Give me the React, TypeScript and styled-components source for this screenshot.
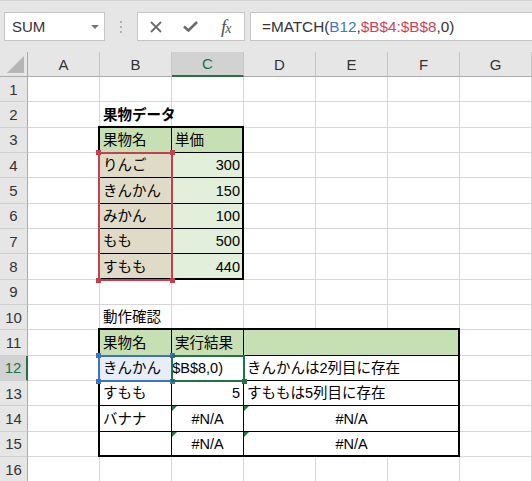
import React from "react";
import styled, { createGlobalStyle, css } from "styled-components";

type Align = "left" | "right" | "center";

interface CellDef {
  r: number;
  c: number;
  span?: number;
  text?: string;
  bg?: string;
  align?: Align;
  bold?: boolean;
  err?: boolean;
  edit?: boolean;
}

const GRID = "#d6d6d6";
const EXCEL_GREEN = "#217346";
const HEAD_GREEN = "#c6e0b4";
const TAN = "#dfdbc6";
const MINT = "#e2efda";
const PALE_BLUE = "#e7eef9";

const COLS = ["A", "B", "C", "D", "E", "F", "G"];
const ROWS = Array.from({ length: 16 }, (_, i) => i + 1);

const tables = [
  { r1: 3, r2: 8, c1: 2, c2: 3 },
  { r1: 11, r2: 15, c1: 2, c2: 6 },
];

const fruits = [
  ["りんご", "300"],
  ["きんかん", "150"],
  ["みかん", "100"],
  ["もも", "500"],
  ["すもも", "440"],
];

const defs: CellDef[] = [
  { r: 2, c: 2, text: "果物データ", bold: true },
  { r: 3, c: 2, text: "果物名", bg: HEAD_GREEN },
  { r: 3, c: 3, text: "単価", bg: HEAD_GREEN },
  ...fruits.flatMap(([name, price], i): CellDef[] => [
    { r: 4 + i, c: 2, text: name, bg: TAN },
    { r: 4 + i, c: 3, text: price, bg: MINT, align: "right" },
  ]),
  { r: 10, c: 2, text: "動作確認" },
  { r: 11, c: 2, text: "果物名", bg: HEAD_GREEN },
  { r: 11, c: 3, text: "実行結果", bg: HEAD_GREEN },
  { r: 11, c: 4, span: 3, bg: HEAD_GREEN },
  { r: 12, c: 2, text: "きんかん", bg: PALE_BLUE },
  // cell is being edited: only the tail of the formula is scrolled into view
  { r: 12, c: 3, text: "$B$8,0)", edit: true },
  { r: 12, c: 4, span: 3, text: "きんかんは2列目に存在" },
  { r: 13, c: 2, text: "すもも" },
  { r: 13, c: 3, text: "5", align: "right" },
  { r: 13, c: 4, span: 3, text: "すももは5列目に存在" },
  { r: 14, c: 2, text: "バナナ" },
  { r: 14, c: 3, text: "#N/A", align: "center", err: true },
  { r: 14, c: 4, span: 3, text: "#N/A", align: "center", err: true },
  { r: 15, c: 3, text: "#N/A", align: "center", err: true },
  { r: 15, c: 4, span: 3, text: "#N/A", align: "center", err: true },
];

const GlobalStyle = createGlobalStyle`
  html, body {
    margin: 0;
    padding: 0;
  }
  body {
    background: #e6e6e6;
    font-family: "Liberation Sans", "Noto Sans CJK JP", sans-serif;
    color: #000;
    overflow: hidden;
  }
`;

const Window = styled.div`
  width: 532px;
  height: 481px;
  overflow: hidden;
  display: flex;
  flex-direction: column;
  background: #fff;
`;

const Toolbar = styled.div`
  height: 52px;
  flex: none;
  box-sizing: border-box;
  display: flex;
  align-items: flex-start;
  padding: 11px 0 0 4px;
  background: #e6e6e6;
  border-top: 1px solid #d4d4d4;
`;

const Box = styled.div`
  height: 29px;
  box-sizing: border-box;
  display: flex;
  align-items: center;
  background: #fff;
  border: 1px solid #c6c6c6;
`;

const NameBox = styled(Box)`
  width: 101px;
  padding: 0 5px 0 7px;
  font-size: 15px;
  color: #333;
`;

const DropArrow = styled.span`
  margin-left: auto;
  width: 0;
  height: 0;
  border-left: 4px solid transparent;
  border-right: 4px solid transparent;
  border-top: 4px solid #777;
`;

const Grip = styled.div`
  width: 32px;
  height: 29px;
  display: flex;
  flex-direction: column;
  align-items: center;
  justify-content: center;
  gap: 3px;

  span {
    width: 2px;
    height: 2px;
    background: #b0b0b0;
  }
`;

const ButtonBox = styled(Box)`
  width: 108px;
`;

const IconSlot = styled.div`
  width: 36px;
  height: 100%;
  display: flex;
  align-items: center;
  justify-content: center;
  color: #6b6b6b;
`;

const Fx = styled.span`
  display: flex;
  align-items: baseline;
  font-family: "Liberation Serif", "DejaVu Serif", serif;
  font-style: italic;
  font-size: 19px;
  line-height: 1;
  color: #555;

  span {
    font-size: 14px;
    margin-left: -1px;
  }
`;

const FormulaBox = styled(Box)`
  flex: 1;
  margin-left: 5px;
  padding-left: 11px;
  border-right: none;
  font-size: 15.3px;
  color: #333;
  white-space: nowrap;
`;

const Ref = styled.span<{ $color: string }>`
  color: ${p => p.$color};
`;

const Sheet = styled.div`
  flex: 1;
  display: grid;
  grid-template-columns: 28px repeat(7, 72px);
  grid-template-rows: 25px repeat(16, 25.33px);
  background: #fff;
`;

const Corner = styled.div`
  grid-row: 1;
  grid-column: 1;
  box-sizing: border-box;
  display: flex;
  align-items: flex-end;
  justify-content: flex-end;
  padding: 0 3px 3px 0;
  background: #e6e6e6;
  border-right: 1px solid #ababab;
  border-bottom: 1px solid #ababab;

  &::after {
    content: "";
    width: 0;
    height: 0;
    border-left: 17px solid transparent;
    border-bottom: 17px solid #b5b5b5;
  }
`;

const ColHead = styled.div<{ $c: number; $active: boolean }>`
  grid-row: 1;
  grid-column: ${p => p.$c + 1};
  box-sizing: border-box;
  display: flex;
  align-items: center;
  justify-content: center;
  font-size: 15px;
  background: ${p => (p.$active ? "#d2d2d2" : "#e6e6e6")};
  color: ${p => (p.$active ? EXCEL_GREEN : "#333")};
  border-right: 1px solid #c6c6c6;
  border-bottom: ${p => (p.$active ? `2px solid ${EXCEL_GREEN}` : "1px solid #ababab")};
`;

const RowHead = styled.div<{ $r: number; $active: boolean }>`
  grid-row: ${p => p.$r + 1};
  grid-column: 1;
  box-sizing: border-box;
  display: flex;
  align-items: center;
  justify-content: center;
  font-size: 15px;
  background: ${p => (p.$active ? "#d2d2d2" : "#e6e6e6")};
  color: ${p => (p.$active ? EXCEL_GREEN : "#333")};
  border-right: ${p => (p.$active ? `2px solid ${EXCEL_GREEN}` : "1px solid #ababab")};
  border-bottom: 1px solid #cfcfcf;
`;

const Cell = styled.div<{
  $r: number;
  $c: number;
  $span: number;
  $bg?: string;
  $align: Align;
  $bold?: boolean;
  $rb: boolean;
  $bb: boolean;
  $err?: boolean;
}>`
  grid-row: ${p => p.$r + 1};
  grid-column: ${p => p.$c + 1} / span ${p => p.$span};
  position: relative;
  min-width: 0;
  box-sizing: border-box;
  display: flex;
  align-items: center;
  justify-content: ${p =>
    p.$align === "right" ? "flex-end" : p.$align === "center" ? "center" : "flex-start"};
  padding: 1px 3px 0 3px;
  background: ${p => p.$bg ?? "transparent"};
  border-right: 1px solid ${p => (p.$rb ? "#000" : GRID)};
  border-bottom: 1px solid ${p => (p.$bb ? "#000" : GRID)};
  font-size: 14.5px;
  font-weight: ${p => (p.$bold ? 700 : 400)};
  line-height: 1;
  white-space: nowrap;

  ${p =>
    p.$err &&
    css`
      &::before {
        content: "";
        position: absolute;
        top: 0;
        left: 0;
        border-top: 5px solid #1e7a3c;
        border-right: 5px solid transparent;
      }
    `}
`;

const EditCell = styled(Cell)`
  justify-content: flex-end;
  overflow: hidden;
  padding-right: 20px;
  background: #fff;
`;

const Frame = styled.div<{
  $r1: number;
  $r2: number;
  $c1: number;
  $c2: number;
  $color: string;
  $m: string;
  $z: number;
}>`
  grid-row: ${p => p.$r1 + 1} / ${p => p.$r2 + 2};
  grid-column: ${p => p.$c1 + 1} / ${p => p.$c2 + 2};
  margin: ${p => p.$m};
  border: 2px solid ${p => p.$color};
  position: relative;
  z-index: ${p => p.$z};
  pointer-events: none;
`;

const Handle = styled.span<{ $color: string; $v: "top" | "bottom"; $h: "left" | "right" }>`
  position: absolute;
  ${p => p.$v}: -4px;
  ${p => p.$h}: -4px;
  width: 5px;
  height: 5px;
  background: ${p => p.$color};
`;

function RefRange({ r1, r2, c, color }: { r1: number; r2: number; c: number; color: string }) {
  return (
    <Frame $r1={r1} $r2={r2} $c1={c} $c2={c} $color={color} $m="-1px -1px -1px -2px" $z={2}>
      <Handle $color={color} $v="top" $h="left" />
      <Handle $color={color} $v="top" $h="right" />
      <Handle $color={color} $v="bottom" $h="left" />
      <Handle $color={color} $v="bottom" $h="right" />
    </Frame>
  );
}

function buildCells() {
  const out: React.ReactNode[] = [];
  for (const r of ROWS) {
    let c = 1;
    while (c <= 7) {
      const def = defs.find(d => d.r === r && d.c === c) ?? { r, c };
      const span = def.span ?? 1;
      const end = c + span - 1;
      const t = tables.find(tb => r >= tb.r1 && r <= tb.r2 && c >= tb.c1 && c <= tb.c2);
      const props = {
        $r: r,
        $c: c,
        $span: span,
        $bg: def.bg,
        $align: def.align ?? ("left" as Align),
        $bold: def.bold,
        $rb: !!t && end < t.c2,
        $bb: !!t && r < t.r2,
        $err: def.err,
      };
      const Comp = def.edit ? EditCell : Cell;
      out.push(
        <Comp key={`${r}-${c}`} {...props}>
          {def.text}
        </Comp>
      );
      c = end + 1;
    }
  }
  return out;
}

export default function App() {
  return (
    <Window>
      <GlobalStyle />
      <Toolbar>
        <NameBox>
          SUM
          <DropArrow />
        </NameBox>
        <Grip>
          <span />
          <span />
          <span />
        </Grip>
        <ButtonBox>
          <IconSlot>
            <svg width="12" height="12" viewBox="0 0 12 12">
              <path d="M1 1 L11 11 M11 1 L1 11" stroke="currentColor" strokeWidth="1.8" fill="none" />
            </svg>
          </IconSlot>
          <IconSlot>
            <svg width="15" height="11" viewBox="0 0 15 11">
              <path d="M1 5.5 L5.5 9.5 L14 1" stroke="currentColor" strokeWidth="2.6" fill="none" />
            </svg>
          </IconSlot>
          <IconSlot>
            <Fx>
              f<span>x</span>
            </Fx>
          </IconSlot>
        </ButtonBox>
        <FormulaBox>
          =MATCH(<Ref $color="#3f74cc">B12</Ref>,<Ref $color="#cc4256">$B$4:$B$8</Ref>,0)
        </FormulaBox>
      </Toolbar>
      <Sheet>
        <Corner />
        {COLS.map((name, i) => (
          <ColHead key={name} $c={i + 1} $active={name === "C"}>
            {name}
          </ColHead>
        ))}
        {ROWS.map(r => (
          <RowHead key={r} $r={r} $active={r === 12}>
            {r}
          </RowHead>
        ))}
        {buildCells()}
        {tables.map((t, i) => (
          <Frame key={i} $r1={t.r1} $r2={t.r2} $c1={t.c1} $c2={t.c2} $color="#000" $m="-2px 0 0 -2px" $z={1} />
        ))}
        <RefRange r1={4} r2={8} c={2} color="#c4404c" />
        <RefRange r1={12} r2={12} c={2} color="#3c72c8" />
        <Frame $r1={12} $r2={12} $c1={3} $c2={3} $color={EXCEL_GREEN} $m="-1px" $z={3}>
          <Handle $color={EXCEL_GREEN} $v="bottom" $h="right" />
        </Frame>
      </Sheet>
    </Window>
  );
}
